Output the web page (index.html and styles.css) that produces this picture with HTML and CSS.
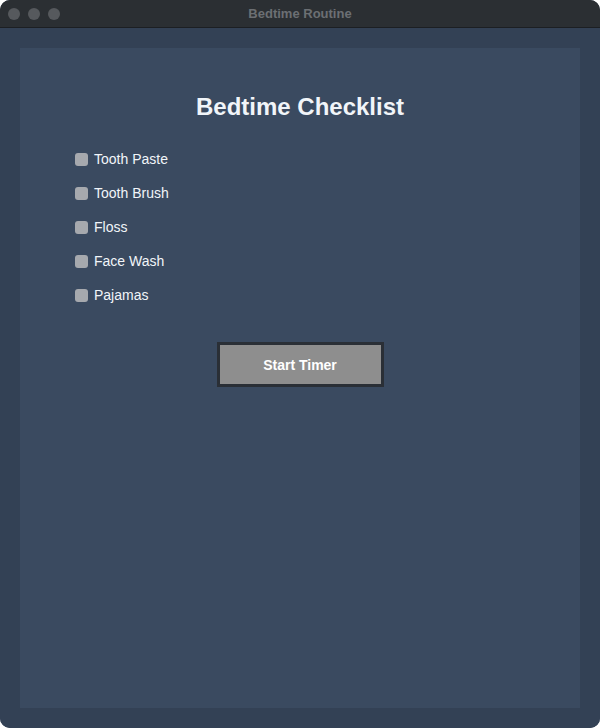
FILE: index.html
```html
<!DOCTYPE html>
<html lang="en">
<head>
<meta charset="utf-8">
<title>Bedtime Routine</title>
<link rel="stylesheet" href="styles.css">
</head>
<body>
<div class="window">
  <div class="titlebar">
    <div class="lights">
      <span class="light"></span>
      <span class="light"></span>
      <span class="light"></span>
    </div>
    <div class="title">Bedtime Routine</div>
  </div>
  <div class="frame">
    <div class="panel">
      <h1 class="heading">Bedtime Checklist</h1>
      <ul class="checklist">
        <li class="item"><span class="box"></span><span class="label">Tooth Paste</span></li>
        <li class="item"><span class="box"></span><span class="label">Tooth Brush</span></li>
        <li class="item"><span class="box"></span><span class="label">Floss</span></li>
        <li class="item"><span class="box"></span><span class="label">Face Wash</span></li>
        <li class="item"><span class="box"></span><span class="label">Pajamas</span></li>
      </ul>
      <div class="actions">
        <button class="start">Start Timer</button>
      </div>
    </div>
  </div>
</div>
</body>
</html>
```

FILE: styles.css
```css
* { box-sizing: border-box; }
html, body { margin: 0; padding: 0; background: #ffffff; }
body { width: 600px; height: 728px; font-family: "Liberation Sans", Arial, sans-serif; }

.window {
  width: 600px;
  height: 728px;
  border-radius: 10px;
  overflow: hidden;
  display: flex;
  flex-direction: column;
  background: #334155;
}

.titlebar {
  height: 28px;
  flex: 0 0 28px;
  background: #2b2f33;
  border-bottom: 1px solid #1c1f23;
  display: flex;
  align-items: center;
  position: relative;
}
.lights { display: flex; gap: 8px; padding-left: 8px; }
.light { width: 12px; height: 12px; border-radius: 50%; background: #56595d; }
.title {
  position: absolute;
  left: 0; right: 0; top: 0;
  line-height: 27px;
  text-align: center;
  color: #6c6f73;
  font-weight: bold;
  font-size: 13px;
}

.frame {
  flex: 1;
  padding: 20px 20px 20px 20px;
  background: #334155;
  display: flex;
}
.panel {
  flex: 1;
  background: #3a4a60;
  padding: 45px 55px 0 55px;
}
.heading {
  margin: 0;
  font-size: 24px;
  line-height: 28px;
  font-weight: bold;
  text-align: center;
  color: #f1f5f9;
}
.checklist {
  list-style: none;
  margin: 21px 0 0 0;
  padding: 0;
}
.item {
  height: 34px;
  display: flex;
  align-items: center;
  gap: 6px;
}
.box {
  width: 13px;
  height: 13px;
  border-radius: 3px;
  background: #a6a9ae;
}
.label {
  color: #f1f5f9;
  font-size: 14px;
}
.actions {
  display: flex;
  justify-content: center;
  margin-top: 30px;
}
.start {
  width: 167px;
  height: 45px;
  background: #8e8e8e;
  border: 3px solid #2a2f36;
  color: #ffffff;
  font-family: "Liberation Sans", Arial, sans-serif;
  font-weight: bold;
  font-size: 14px;
  padding: 0;
}
```
